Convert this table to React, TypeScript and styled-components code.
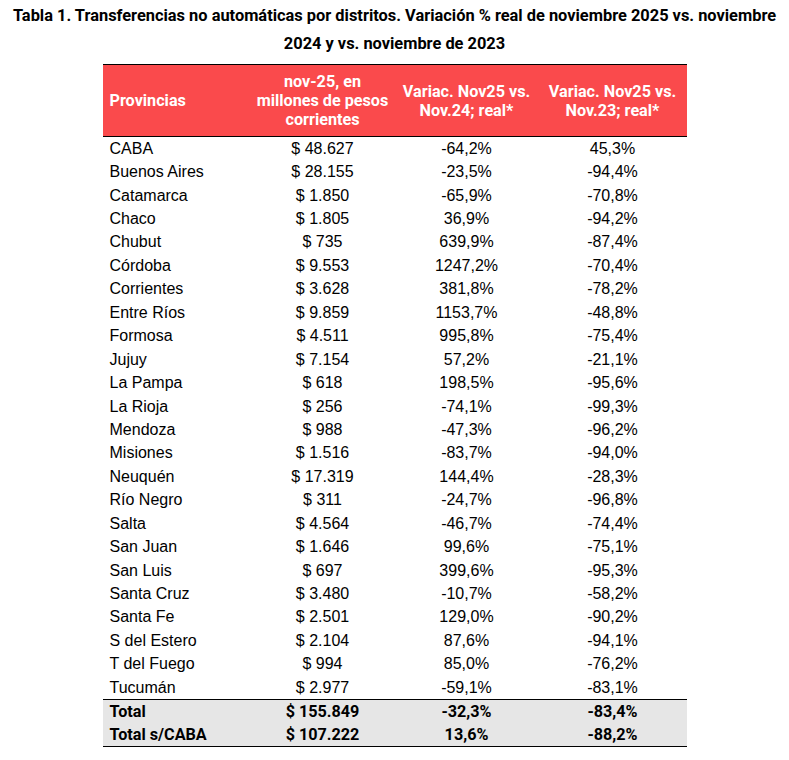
import React from 'react';
import styled, { createGlobalStyle } from 'styled-components';

const GlobalStyle = createGlobalStyle`
  html, body { margin: 0; padding: 0; background: #fff; }
  body { font-family: "Liberation Sans", Arial, sans-serif; color: #000; }
`;

const Page = styled.main`
  width: 789px;
  padding-top: 2px;
`;

const Title = styled.h1`
  margin: 0;
  font-family: Roboto, "Liberation Sans", sans-serif;
  font-weight: 700;
  font-size: 16.4px;
  line-height: 28px;
  text-align: center;
  white-space: nowrap;
  color: #000;
`;

const Table = styled.table`
  margin: 6px auto 0;
  width: 584px;
  border-collapse: collapse;
  table-layout: fixed;
`;

const HeadCell = styled.th<{ $w: number; $left?: boolean }>`
  box-sizing: border-box;
  width: ${(p) => p.$w}px;
  height: 72px;
  padding: ${(p) => (p.$left ? '0 0 0 7px' : '0 2px')};
  background: #fa4a4c;
  color: #fff;
  border-top: 1px solid #000;
  border-bottom: 1px solid #000;
  font-family: Roboto, "Liberation Sans", sans-serif;
  font-weight: 700;
  font-size: 16.2px;
  line-height: 19px;
  text-align: ${(p) => (p.$left ? 'left' : 'center')};
  vertical-align: middle;
`;

const Row = styled.tr<{ $total?: boolean; $first?: boolean; $last?: boolean }>`
  height: ${(p) => (p.$total ? '23.5px' : '23.45px')};
  background: ${(p) => (p.$total ? '#e6e6e6' : 'transparent')};
  border-top: ${(p) => (p.$first ? '1px solid #000' : 'none')};
  border-bottom: ${(p) => (p.$last ? '1px solid #000' : 'none')};
`;

const Cell = styled.td<{ $left?: boolean; $bold?: boolean }>`
  box-sizing: border-box;
  padding: ${(p) => (p.$left ? '1px 0 0 7px' : '1px 0 0')};
  text-align: ${(p) => (p.$left ? 'left' : 'center')};
  vertical-align: middle;
  line-height: 18px;
  white-space: nowrap;
  font-family: ${(p) => (p.$bold ? 'Roboto, "Liberation Sans", sans-serif' : '"Liberation Sans", Arial, sans-serif')};
  font-weight: ${(p) => (p.$bold ? 700 : 400)};
  font-size: ${(p) => (p.$bold ? '16.2px' : '16px')};
`;

type Item = [string, string, string, string];

const rows: Item[] = [
  ['CABA', '$ 48.627', '-64,2%', '45,3%'],
  ['Buenos Aires', '$ 28.155', '-23,5%', '-94,4%'],
  ['Catamarca', '$ 1.850', '-65,9%', '-70,8%'],
  ['Chaco', '$ 1.805', '36,9%', '-94,2%'],
  ['Chubut', '$ 735', '639,9%', '-87,4%'],
  ['Córdoba', '$ 9.553', '1247,2%', '-70,4%'],
  ['Corrientes', '$ 3.628', '381,8%', '-78,2%'],
  ['Entre Ríos', '$ 9.859', '1153,7%', '-48,8%'],
  ['Formosa', '$ 4.511', '995,8%', '-75,4%'],
  ['Jujuy', '$ 7.154', '57,2%', '-21,1%'],
  ['La Pampa', '$ 618', '198,5%', '-95,6%'],
  ['La Rioja', '$ 256', '-74,1%', '-99,3%'],
  ['Mendoza', '$ 988', '-47,3%', '-96,2%'],
  ['Misiones', '$ 1.516', '-83,7%', '-94,0%'],
  ['Neuquén', '$ 17.319', '144,4%', '-28,3%'],
  ['Río Negro', '$ 311', '-24,7%', '-96,8%'],
  ['Salta', '$ 4.564', '-46,7%', '-74,4%'],
  ['San Juan', '$ 1.646', '99,6%', '-75,1%'],
  ['San Luis', '$ 697', '399,6%', '-95,3%'],
  ['Santa Cruz', '$ 3.480', '-10,7%', '-58,2%'],
  ['Santa Fe', '$ 2.501', '129,0%', '-90,2%'],
  ['S del Estero', '$ 2.104', '87,6%', '-94,1%'],
  ['T del Fuego', '$ 994', '85,0%', '-76,2%'],
  ['Tucumán', '$ 2.977', '-59,1%', '-83,1%'],
];

const totals: Item[] = [
  ['Total', '$ 155.849', '-32,3%', '-83,4%'],
  ['Total s/CABA', '$ 107.222', '13,6%', '-88,2%'],
];

export default function App() {
  return (
    <Page>
      <GlobalStyle />
      <Title>
        Tabla 1. Transferencias no automáticas por distritos. Variación % real de noviembre 2025 vs. noviembre
        <br />
        2024 y vs. noviembre de 2023
      </Title>
      <Table>
        <thead>
          <tr>
            <HeadCell $w={148} $left>Provincias</HeadCell>
            <HeadCell $w={144}>nov-25, en<br />millones de pesos<br />corrientes</HeadCell>
            <HeadCell $w={144}>Variac. Nov25 vs.<br />Nov.24; real*</HeadCell>
            <HeadCell $w={148}>Variac. Nov25 vs.<br />Nov.23; real*</HeadCell>
          </tr>
        </thead>
        <tbody>
          {rows.map((r) => (
            <Row key={r[0]}>
              <Cell $left>{r[0]}</Cell>
              <Cell>{r[1]}</Cell>
              <Cell>{r[2]}</Cell>
              <Cell>{r[3]}</Cell>
            </Row>
          ))}
          {totals.map((r, i) => (
            <Row key={r[0]} $total $first={i === 0} $last={i === totals.length - 1}>
              <Cell $left $bold>{r[0]}</Cell>
              <Cell $bold>{r[1]}</Cell>
              <Cell $bold>{r[2]}</Cell>
              <Cell $bold>{r[3]}</Cell>
            </Row>
          ))}
        </tbody>
      </Table>
    </Page>
  );
}
